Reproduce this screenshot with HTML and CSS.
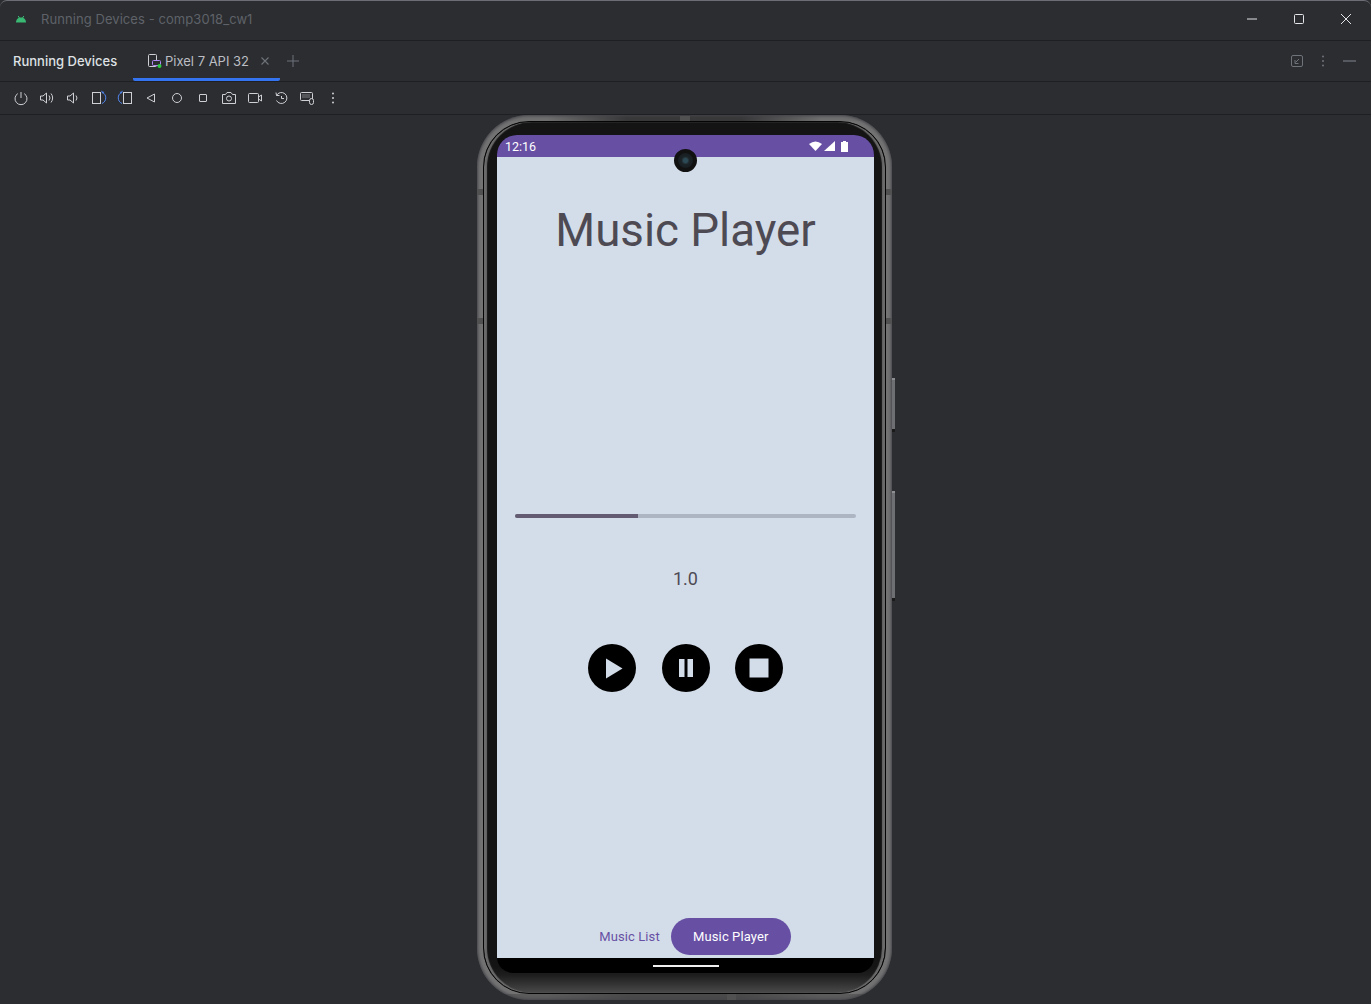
FILE: index.html
```html
<!DOCTYPE html>
<html lang="en">
<head>
<meta charset="utf-8">
<title>Running Devices - comp3018_cw1</title>
<link rel="stylesheet" href="styles.css">
</head>
<body>
<div class="window">
  <header class="titlebar">
    <svg class="app-logo" width="14" height="14" viewBox="0 0 14 14"><path d="M2 10.500C2 7.600 4.200 5.600 7 5.600s5 2 5 4.900z" fill="#3ddc84" opacity=".8"/><path d="M4.200 4l1.200 2M9.800 4L8.600 6" stroke="#3ddc84" stroke-width="1" opacity=".8"/></svg>
    <span class="app-title">Running Devices - comp3018_cw1</span>
    <div class="win-controls">
      <svg width="12" height="12" viewBox="0 0 12 12"><path d="M1 6h10" stroke="#e4e5e8" stroke-width="1"/></svg>
      <svg width="12" height="12" viewBox="0 0 12 12"><rect x="1.500" y="1.500" width="9" height="9" rx="1" fill="none" stroke="#e4e5e8" stroke-width="1"/></svg>
      <svg width="12" height="12" viewBox="0 0 12 12"><path d="M1 1l10 10M11 1L1 11" stroke="#e4e5e8" stroke-width="1"/></svg>
    </div>
  </header>
  <nav class="tabbar">
    <span class="panel-name">Running Devices</span>
    <div class="tab">
      <svg width="16" height="16" viewBox="0 0 16 16"><rect x="1.500" y="1.500" width="8" height="12" rx="1" fill="none" stroke="#ced0d6"/><rect x="5.500" y="7.500" width="8" height="5" rx="1" fill="#2b2d30" stroke="#b189f5"/><circle cx="12.500" cy="13" r="2" fill="#2ecc40"/></svg>
      <span>Pixel 7 API 32</span>
      <svg class="tab-close" width="10" height="10" viewBox="0 0 10 10"><path d="M1.500 1.500l7 7M8.500 1.500l-7 7" stroke="#6f737a" stroke-width="1.100"/></svg>
    </div>
    <svg class="tab-add" width="14" height="14" viewBox="0 0 14 14"><path d="M7 1v12M1 7h12" stroke="#6f737a" stroke-width="1"/></svg>
    <div class="panel-actions">
      <svg width="14" height="14" viewBox="0 0 14 14"><rect x="1.500" y="1.500" width="11" height="11" rx="1.500" fill="none" stroke="#6f737a"/><path d="M9 5L5.500 8.500M5 6v3.500h3.500" fill="none" stroke="#6f737a"/></svg>
      <svg width="4" height="14" viewBox="0 0 4 14"><circle cx="2" cy="2.500" r="1" fill="#6f737a"/><circle cx="2" cy="7" r="1" fill="#6f737a"/><circle cx="2" cy="11.500" r="1" fill="#6f737a"/></svg>
      <svg width="14" height="14" viewBox="0 0 14 14"><path d="M1 7h13" stroke="#6f737a" stroke-width="1.300"/></svg>
    </div>
  </nav>
  <div class="toolbar">
    <svg class="tool" viewBox="0 0 16 16"><path d="M4.800 3.600a6 6 0 1 0 6.400 0M8 2v6" fill="none" stroke="#ced0d6"/></svg>
    <svg class="tool" viewBox="0 0 16 16"><path d="M1.500 6v4h2.500l3.500 3V3L4 6z" fill="none" stroke="#ced0d6"/><path d="M10 5.500a4 4 0 0 1 0 5M12 3.500a7 7 0 0 1 0 9" fill="none" stroke="#ced0d6"/></svg>
    <svg class="tool" viewBox="0 0 16 16"><path d="M2.500 6v4H5l3.500 3V3L5 6z" fill="none" stroke="#ced0d6"/><path d="M11 5.500a4 4 0 0 1 0 5" fill="none" stroke="#ced0d6"/></svg>
    <svg class="tool" viewBox="0 0 16 16"><rect x="1.500" y="2.500" width="8" height="11" fill="none" stroke="#ced0d6"/><path d="M11 2.500c5 1.500 5 9 0 11M10.800 0.800l.5 1.800 1.800-.5" fill="none" stroke="#548af7"/></svg>
    <svg class="tool" viewBox="0 0 16 16"><rect x="6.500" y="2.500" width="8" height="11" fill="none" stroke="#ced0d6"/><path d="M5 2.500c-5 1.500-5 9 0 11M5.200 0.800l-.5 1.800-1.800-.5" fill="none" stroke="#548af7"/></svg>
    <svg class="tool" viewBox="0 0 16 16"><path d="M11.500 4v8L4 8z" fill="none" stroke="#ced0d6"/></svg>
    <svg class="tool" viewBox="0 0 16 16"><circle cx="8" cy="8" r="4.500" fill="none" stroke="#ced0d6"/></svg>
    <svg class="tool" viewBox="0 0 16 16"><rect x="4.500" y="4.500" width="7" height="7" rx=".5" fill="none" stroke="#ced0d6"/></svg>
    <svg class="tool" viewBox="0 0 16 16"><path d="M1.500 4.500h3l1.500-2h4l1.500 2h3v9h-13z" fill="none" stroke="#ced0d6"/><circle cx="8" cy="8.500" r="2.500" fill="none" stroke="#ced0d6"/></svg>
    <svg class="tool" viewBox="0 0 16 16"><rect x="1.500" y="3.500" width="10" height="9" rx="1" fill="none" stroke="#ced0d6"/><path d="M11.500 7l3-2v6l-3-2" fill="none" stroke="#ced0d6"/></svg>
    <svg class="tool" viewBox="0 0 16 16"><path d="M3 2.500l.500 3h3M3.500 5.500a5.500 5.500 0 1 1 0 5" fill="none" stroke="#ced0d6"/><path d="M8.500 6v2.500H11" fill="none" stroke="#ced0d6"/></svg>
    <svg class="tool" viewBox="0 0 16 16"><rect x="1.500" y="2.500" width="12" height="8" rx="1" fill="none" stroke="#ced0d6"/><path d="M3.500 5h8M3.500 7h8" stroke="#ced0d6" stroke-dasharray="1 1"/><rect x="10.500" y="8.500" width="4" height="6" rx="2" fill="#2b2d30" stroke="#ced0d6"/></svg>
    <svg class="tool" viewBox="0 0 16 16"><circle cx="8" cy="3.500" r="1" fill="#ced0d6"/><circle cx="8" cy="8" r="1" fill="#ced0d6"/><circle cx="8" cy="12.500" r="1" fill="#ced0d6"/></svg>
  </div>
  <main class="stage">
    <div class="phone">
      <span class="btn btn-power"></span>
      <span class="btn btn-volume"></span>
      <span class="notch notch-top"></span>
      <span class="notch notch-bottom"></span>
      <span class="notch notch-right-a"></span>
      <span class="notch notch-right-b"></span>
      <span class="notch notch-left-a"></span>
      <span class="notch notch-left-b"></span>
      <div class="bezel">
        <div class="screen">
          <div class="statusbar">
            <span class="clock">12:16</span>
            <div class="status-icons">
              <svg width="13" height="10" viewBox="0 0 13 10"><path d="M0 3Q6.500-2 13 3L6.500 10z" fill="#fff"/></svg>
              <svg width="11" height="10" viewBox="0 0 11 10"><path d="M11 0v10H0z" fill="#fff"/></svg>
              <svg width="7" height="11" viewBox="0 0 7 11"><path d="M2 0h3v1h2v10H0V1h2z" fill="#fff"/></svg>
            </div>
          </div>
          <span class="camera"></span>
          <div class="app">
            <h1 class="app-heading">Music Player</h1>
            <div class="progress"><div class="progress-fill"></div></div>
            <p class="speed">1.0</p>
            <div class="controls">
              <svg class="ctrl" viewBox="0 0 48 48"><circle cx="24" cy="24" r="24"/><path d="M18 14.500v20L34.500 24.500z" fill="#d3dde9"/></svg>
              <svg class="ctrl" viewBox="0 0 48 48"><circle cx="24" cy="24" r="24"/><path d="M17 15h5.500v18H17zM25.500 15H31v18h-5.500z" fill="#d3dde9"/></svg>
              <svg class="ctrl" viewBox="0 0 48 48"><circle cx="24" cy="24" r="24"/><path d="M14.500 14.500h19v19h-19z" fill="#d3dde9"/></svg>
            </div>
            <div class="bottom-nav">
              <span class="nav-link">Music List</span>
              <span class="nav-pill">Music Player</span>
            </div>
          </div>
          <div class="gesture-bar"><span class="gesture-handle"></span></div>
        </div>
      </div>
    </div>
  </main>
</div>
</body>
</html>
```

FILE: styles.css
```css
* { box-sizing: border-box; }
html, body { margin: 0; height: 100%; background: #2b2d30; overflow: hidden; }
.window {
  height: 1004px;
  display: flex;
  flex-direction: column;
  background: #2b2d30;
  border-top: 1px solid #6b6e75;
  border-radius: 7px 7px 0 0;
  font-family: Inter, "Liberation Sans", sans-serif;
  font-size: 13px;
}
.titlebar {
  height: 40px;
  flex: none;
  display: flex;
  align-items: center;
  padding-left: 14px;
  padding-bottom: 3px;
  border-bottom: 1px solid #1e1f22;
}
.app-title { margin-left: 13px; color: #5f6269; letter-spacing: .07px; }
.win-controls { margin-left: auto; display: flex; gap: 35px; padding-right: 19px; }
.tabbar {
  height: 41px;
  flex: none;
  display: flex;
  align-items: center;
  padding-left: 13px;
  border-bottom: 1px solid #1e1f22;
}
.panel-name { color: #dfe1e5; font-weight: 500; width: 120px; }
.tab {
  height: 40px;
  width: 147px;
  display: flex;
  align-items: center;
  padding-left: 14px;
  gap: 2px;
  color: #bcbec4;
  border-bottom: 3px solid #3574f0;
  border-radius: 0 0 2px 2px;
  padding-top: 3px;
}
.tab-close { margin-left: 9px; }
.tab-add { margin-left: 6px; }
.panel-actions { margin-left: auto; display: flex; align-items: center; gap: 17px; padding-right: 15px; }
.toolbar {
  height: 33px;
  flex: none;
  display: flex;
  align-items: center;
  gap: 10px;
  padding-left: 13px;
  border-bottom: 1px solid #1e1f22;
}
.tool { width: 16px; height: 16px; flex: none; }
.stage { flex: 1; display: flex; justify-content: center; align-items: flex-start; }
.phone {
  position: relative;
  width: 415px;
  height: 885px;
  margin-left: -2px;
  padding: 6px;
  border-radius: 52px;
  background:
    linear-gradient(90deg, #6f6f70 0 70px, #38383a 150px 265px, #6f6f70 345px) top / 100% 6px no-repeat,
    linear-gradient(90deg, #5c5c5d 0 70px, #4a4a4b 150px 265px, #5c5c5d 345px) bottom / 100% 6px no-repeat,
    #737374;
  box-shadow: inset 0 0 3px 1px #45454a;
}
.bezel {
  height: 100%;
  padding: 13px 0 0 13px;
  border-radius: 46px;
  border: 1px solid #050505;
  background: linear-gradient(180deg, #141414 0 97%, #1e1e1e 98%, #4a4a4a 100%);
  box-shadow: inset 3px 0 1px #6a6a6a, inset -3px 0 1px #6a6a6a;
}
.btn { position: absolute; right: -3px; width: 3px; background: #6e6f72; border-bottom: 3px solid #1a1a1a; border-top: 2px solid #8d8e90; }
.btn-power { top: 263px; height: 54px; }
.btn-volume { top: 376px; height: 110px; }
.notch { position: absolute; background: #515152; width: 6px; height: 6px; }
.notch-top { top: 1px; left: 203px; width: 10px; height: 5px; }
.notch-bottom { bottom: 0; left: 250px; width: 9px; }
.notch-right-a { top: 203px; right: 0; }
.notch-right-b { top: 74px; right: 0; }
.notch-left-a { top: 203px; left: 0; }
.notch-left-b { top: 74px; left: 0; }
.screen {
  position: relative;
  width: 377px;
  height: 838px;
  display: flex;
  flex-direction: column;
  background: #000;
  border-radius: 20px 20px 16px 16px;
  overflow: hidden;
}
.statusbar {
  height: 22px;
  flex: none;
  display: flex;
  align-items: center;
  justify-content: space-between;
  padding: 0 26px 0 8px;
  background: #6750a4;
  color: #fff;
  font: 400 12.500px Roboto, sans-serif;
}
.status-icons { display: flex; align-items: center; gap: 2px; }
.status-icons svg:last-child { margin-left: 4px; }
.camera {
  position: absolute;
  top: 14px;
  left: 177px;
  width: 23px;
  height: 23px;
  border-radius: 50%;
  border: 4px solid #111;
  background: radial-gradient(circle, #2c4a55 0 2px, #1c2428 4px, #14181a);
}
.app {
  height: 801px;
  flex: none;
  display: flex;
  flex-direction: column;
  align-items: center;
  background: #d3dde9;
  font-family: Roboto, sans-serif;
}
.app-heading { margin: 46px 0 0; height: 56px; line-height: 56px; font-size: 45.700px; font-weight: 400; color: #4e4a54; }
.progress { width: 341px; height: 4px; margin-top: 255px; border-radius: 2px; background: #adb5c3; overflow: hidden; }
.progress-fill { width: 123px; height: 100%; background: #625b71; }
.speed { margin: 49px 0 0; height: 24px; line-height: 24px; font-size: 18px; font-weight: 400; color: #4e4a54; }
.controls { display: flex; gap: 25.500px; margin-top: 53px; }
.ctrl { width: 48px; height: 48px; fill: #000; display: block; }
.bottom-nav {
  margin-top: auto;
  margin-bottom: 3px;
  display: flex;
  align-items: center;
  gap: 11px;
  font-size: 13px;
  font-weight: 400;
  letter-spacing: .1px;
}
.nav-link { color: #6750a4; margin-left: 19px; }
.nav-pill {
  width: 120px;
  height: 37px;
  display: flex;
  align-items: center;
  justify-content: center;
  border-radius: 19px;
  background: #6750a4;
  color: #fff;
}
.gesture-bar { flex: 1; display: flex; justify-content: center; padding-top: 7px; }
.gesture-handle { width: 66px; height: 2px; background: #f0f0f0; }
```
